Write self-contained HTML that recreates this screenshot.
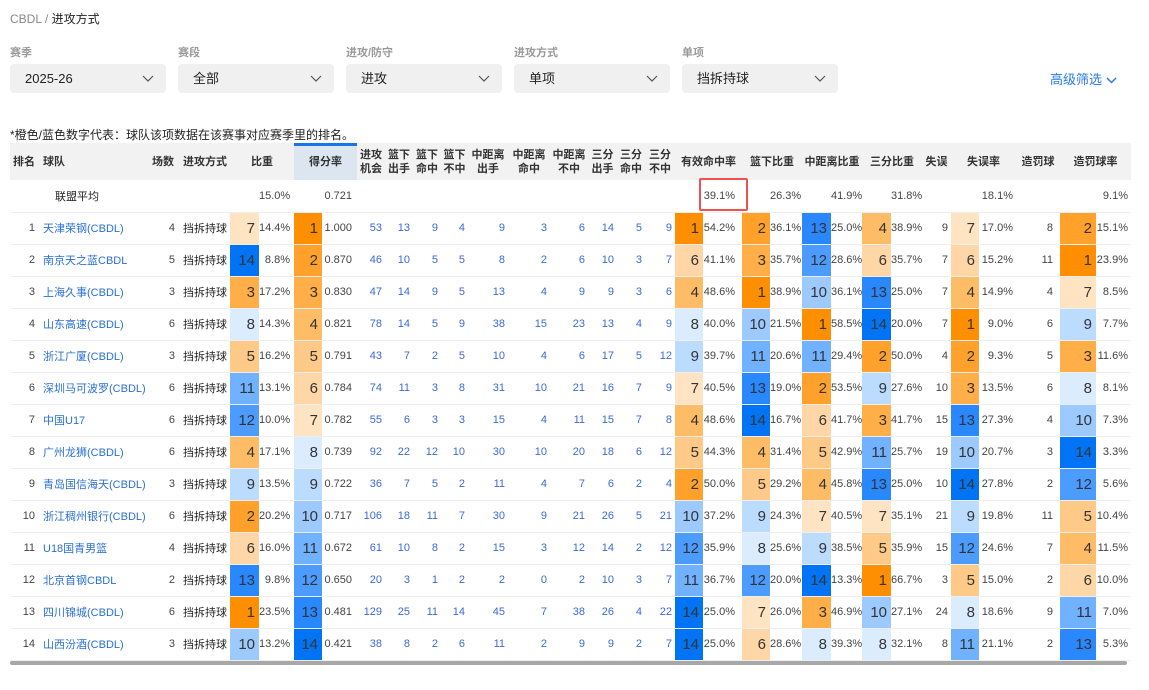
<!DOCTYPE html>
<html><head><meta charset="utf-8">
<style>
*{margin:0;padding:0;box-sizing:border-box}
body{width:1149px;height:690px;background:#fff;font-family:"Liberation Sans","Noto Sans CJK SC",sans-serif;position:relative;overflow:hidden;color:#333}
.bc{position:absolute;left:10px;top:10px;font-size:12px;color:#888}
.bc b{font-weight:normal;color:#222}
.lab{position:absolute;top:44px;font-size:11px;color:#999;font-weight:bold}
.sel{position:absolute;top:64px;width:156px;height:29px;background:#f0f0f0;border-radius:4px;font-size:13px;color:#222;padding-left:15px;line-height:29px}
.sel svg{position:absolute;right:12px;top:11px}
.adv{position:absolute;left:1050px;top:69px;font-size:13px;color:#2a7ae2}
.note{position:absolute;left:10px;top:126px;font-size:12px;color:#222}
table{position:absolute;left:10px;top:143px;border-collapse:collapse;table-layout:fixed;width:1121px}
td{height:32px;border-bottom:1px solid #eee;font-size:11px;color:#444;text-align:right;padding:0 3px 0 0;white-space:nowrap;overflow:hidden}
thead td{height:37px;background:#f2f2f2;font-size:11px;font-weight:bold;color:#333;text-align:center;padding:0;line-height:14px;border-bottom:none}
thead td.hl{background:#dce6f0;box-shadow:inset 0 3px 0 #1a73e8}
td.rk{padding-right:5px;color:#444;font-size:11px}
td.tm{text-align:left;padding-left:3px;color:#2a6fd6;font-size:11px}
td.md{text-align:left;padding-left:5px;color:#222;font-size:11px}
td.n{color:#3a6ad8}
td.r{font-size:15px;color:#333;padding-right:4px}
.c1{background:#ff8f00}.c2{background:#ffa12a}.c3{background:#ffae48}.c4{background:#ffbc66}.c5{background:#ffc987}.c6{background:#ffd7a6}.c7{background:#ffe4c4}
.c8{background:#dcecff}.c9{background:#bcdcff}.c10{background:#9ccaff}.c11{background:#70b2ff}.c12{background:#4c9cff}.c13{background:#2a88ff}.c14{background:#0074f5}
.box{position:absolute;left:699px;top:178px;width:49px;height:33px;border:2px solid #f05050;border-radius:2px}
.sb{position:absolute;left:10px;top:661px;width:1117px;height:4px;background:#a8a8a8;border-radius:2px}
</style></head><body>
<div class="bc">CBDL / <b>进攻方式</b></div>
<div class="lab" style="left:10px">赛季</div>
<div class="lab" style="left:178px">赛段</div>
<div class="lab" style="left:346px">进攻/防守</div>
<div class="lab" style="left:514px">进攻方式</div>
<div class="lab" style="left:682px">单项</div>
<div class="sel" style="left:10px">2025-26<svg width="12" height="7" viewBox="0 0 12 7"><path d="M1 1l5 5 5-5" fill="none" stroke="#555" stroke-width="1.2"/></svg></div>
<div class="sel" style="left:178px">全部<svg width="12" height="7" viewBox="0 0 12 7"><path d="M1 1l5 5 5-5" fill="none" stroke="#555" stroke-width="1.2"/></svg></div>
<div class="sel" style="left:346px">进攻<svg width="12" height="7" viewBox="0 0 12 7"><path d="M1 1l5 5 5-5" fill="none" stroke="#555" stroke-width="1.2"/></svg></div>
<div class="sel" style="left:514px">单项<svg width="12" height="7" viewBox="0 0 12 7"><path d="M1 1l5 5 5-5" fill="none" stroke="#555" stroke-width="1.2"/></svg></div>
<div class="sel" style="left:682px">挡拆持球<svg width="12" height="7" viewBox="0 0 12 7"><path d="M1 1l5 5 5-5" fill="none" stroke="#555" stroke-width="1.2"/></svg></div>
<div class="adv">高级筛选 <svg width="11" height="7" viewBox="0 0 11 7"><path d="M1 1l4.5 4.5L10 1" fill="none" stroke="#2a7ae2" stroke-width="1.5"/></svg></div>
<div class="note">*橙色/蓝色数字代表：球队该项数据在该赛事对应赛季里的排名。</div>
<table>
<colgroup>
<col style="width:30px"><col style="width:110px"><col style="width:28px"><col style="width:52px">
<col style="width:29px"><col style="width:35px"><col style="width:28px"><col style="width:35px">
<col style="width:28px"><col style="width:28px"><col style="width:28px"><col style="width:27px">
<col style="width:40px"><col style="width:42px"><col style="width:38px"><col style="width:29px"><col style="width:28px"><col style="width:30px">
<col style="width:28px"><col style="width:39px"><col style="width:28px"><col style="width:32px"><col style="width:29px"><col style="width:31px"><col style="width:29px"><col style="width:31px">
<col style="width:29px"><col style="width:28px"><col style="width:37px"><col style="width:44px"><col style="width:36px"><col style="width:35px">
</colgroup>
<thead><tr>
<td style="text-align:left;padding-left:3px">排名</td><td style="text-align:left;padding-left:3px">球队</td><td style="text-align:right;padding-right:4px">场数</td><td style="text-align:left;padding-left:5px">进攻方式</td>
<td colspan="2">比重</td><td colspan="2" class="hl">得分率</td>
<td>进攻<br>机会</td><td>篮下<br>出手</td><td>篮下<br>命中</td><td>篮下<br>不中</td><td>中距离<br>出手</td><td>中距离<br>命中</td><td>中距离<br>不中</td><td>三分<br>出手</td><td>三分<br>命中</td><td>三分<br>不中</td>
<td colspan="2">有效命中率</td><td colspan="2">篮下比重</td><td colspan="2">中距离比重</td><td colspan="2">三分比重</td><td>失误</td><td colspan="2">失误率</td><td>造罚球</td><td colspan="2">造罚球率</td>
</tr></thead>
<tbody>
<tr><td></td><td colspan="3" class="md" style="padding-left:15px">联盟平均</td><td></td><td style="padding-right:4px">15.0%</td><td></td><td style="padding-right:5px">0.721</td><td></td><td></td><td></td><td></td><td></td><td></td><td></td><td></td><td></td><td></td><td></td><td style="padding-right:7px">39.1%</td><td></td><td>26.3%</td><td></td><td>41.9%</td><td></td><td>31.8%</td><td></td><td></td><td>18.1%</td><td></td><td></td><td>9.1%</td></tr>
<tr><td class="rk">1</td><td class="tm">天津荣钢(CBDL)</td><td>4</td><td class="md">挡拆持球</td><td class="r c7">7</td><td style="padding-right:4px">14.4%</td><td class="r c1">1</td><td style="padding-right:5px">1.000</td><td class="n">53</td><td class="n">13</td><td class="n">9</td><td class="n">4</td><td class="n">9</td><td class="n">3</td><td class="n">6</td><td class="n">14</td><td class="n">5</td><td class="n">9</td><td class="r c1">1</td><td style="padding-right:7px">54.2%</td><td class="r c2">2</td><td>36.1%</td><td class="r c13">13</td><td>25.0%</td><td class="r c4">4</td><td>38.9%</td><td>9</td><td class="r c7">7</td><td>17.0%</td><td style="padding-right:7px">8</td><td class="r c2">2</td><td>15.1%</td></tr>
<tr><td class="rk">2</td><td class="tm">南京天之蓝CBDL</td><td>5</td><td class="md">挡拆持球</td><td class="r c14">14</td><td style="padding-right:4px">8.8%</td><td class="r c2">2</td><td style="padding-right:5px">0.870</td><td class="n">46</td><td class="n">10</td><td class="n">5</td><td class="n">5</td><td class="n">8</td><td class="n">2</td><td class="n">6</td><td class="n">10</td><td class="n">3</td><td class="n">7</td><td class="r c6">6</td><td style="padding-right:7px">41.1%</td><td class="r c3">3</td><td>35.7%</td><td class="r c12">12</td><td>28.6%</td><td class="r c6">6</td><td>35.7%</td><td>7</td><td class="r c6">6</td><td>15.2%</td><td style="padding-right:7px">11</td><td class="r c1">1</td><td>23.9%</td></tr>
<tr><td class="rk">3</td><td class="tm">上海久事(CBDL)</td><td>3</td><td class="md">挡拆持球</td><td class="r c3">3</td><td style="padding-right:4px">17.2%</td><td class="r c3">3</td><td style="padding-right:5px">0.830</td><td class="n">47</td><td class="n">14</td><td class="n">9</td><td class="n">5</td><td class="n">13</td><td class="n">4</td><td class="n">9</td><td class="n">9</td><td class="n">3</td><td class="n">6</td><td class="r c4">4</td><td style="padding-right:7px">48.6%</td><td class="r c1">1</td><td>38.9%</td><td class="r c10">10</td><td>36.1%</td><td class="r c13">13</td><td>25.0%</td><td>7</td><td class="r c4">4</td><td>14.9%</td><td style="padding-right:7px">4</td><td class="r c7">7</td><td>8.5%</td></tr>
<tr><td class="rk">4</td><td class="tm">山东高速(CBDL)</td><td>6</td><td class="md">挡拆持球</td><td class="r c8">8</td><td style="padding-right:4px">14.3%</td><td class="r c4">4</td><td style="padding-right:5px">0.821</td><td class="n">78</td><td class="n">14</td><td class="n">5</td><td class="n">9</td><td class="n">38</td><td class="n">15</td><td class="n">23</td><td class="n">13</td><td class="n">4</td><td class="n">9</td><td class="r c8">8</td><td style="padding-right:7px">40.0%</td><td class="r c10">10</td><td>21.5%</td><td class="r c1">1</td><td>58.5%</td><td class="r c14">14</td><td>20.0%</td><td>7</td><td class="r c1">1</td><td>9.0%</td><td style="padding-right:7px">6</td><td class="r c9">9</td><td>7.7%</td></tr>
<tr><td class="rk">5</td><td class="tm">浙江广厦(CBDL)</td><td>3</td><td class="md">挡拆持球</td><td class="r c5">5</td><td style="padding-right:4px">16.2%</td><td class="r c5">5</td><td style="padding-right:5px">0.791</td><td class="n">43</td><td class="n">7</td><td class="n">2</td><td class="n">5</td><td class="n">10</td><td class="n">4</td><td class="n">6</td><td class="n">17</td><td class="n">5</td><td class="n">12</td><td class="r c9">9</td><td style="padding-right:7px">39.7%</td><td class="r c11">11</td><td>20.6%</td><td class="r c11">11</td><td>29.4%</td><td class="r c2">2</td><td>50.0%</td><td>4</td><td class="r c2">2</td><td>9.3%</td><td style="padding-right:7px">5</td><td class="r c3">3</td><td>11.6%</td></tr>
<tr><td class="rk">6</td><td class="tm">深圳马可波罗(CBDL)</td><td>6</td><td class="md">挡拆持球</td><td class="r c11">11</td><td style="padding-right:4px">13.1%</td><td class="r c6">6</td><td style="padding-right:5px">0.784</td><td class="n">74</td><td class="n">11</td><td class="n">3</td><td class="n">8</td><td class="n">31</td><td class="n">10</td><td class="n">21</td><td class="n">16</td><td class="n">7</td><td class="n">9</td><td class="r c7">7</td><td style="padding-right:7px">40.5%</td><td class="r c13">13</td><td>19.0%</td><td class="r c2">2</td><td>53.5%</td><td class="r c9">9</td><td>27.6%</td><td>10</td><td class="r c3">3</td><td>13.5%</td><td style="padding-right:7px">6</td><td class="r c8">8</td><td>8.1%</td></tr>
<tr><td class="rk">7</td><td class="tm">中国U17</td><td>6</td><td class="md">挡拆持球</td><td class="r c12">12</td><td style="padding-right:4px">10.0%</td><td class="r c7">7</td><td style="padding-right:5px">0.782</td><td class="n">55</td><td class="n">6</td><td class="n">3</td><td class="n">3</td><td class="n">15</td><td class="n">4</td><td class="n">11</td><td class="n">15</td><td class="n">7</td><td class="n">8</td><td class="r c4">4</td><td style="padding-right:7px">48.6%</td><td class="r c14">14</td><td>16.7%</td><td class="r c6">6</td><td>41.7%</td><td class="r c3">3</td><td>41.7%</td><td>15</td><td class="r c13">13</td><td>27.3%</td><td style="padding-right:7px">4</td><td class="r c10">10</td><td>7.3%</td></tr>
<tr><td class="rk">8</td><td class="tm">广州龙狮(CBDL)</td><td>6</td><td class="md">挡拆持球</td><td class="r c4">4</td><td style="padding-right:4px">17.1%</td><td class="r c8">8</td><td style="padding-right:5px">0.739</td><td class="n">92</td><td class="n">22</td><td class="n">12</td><td class="n">10</td><td class="n">30</td><td class="n">10</td><td class="n">20</td><td class="n">18</td><td class="n">6</td><td class="n">12</td><td class="r c5">5</td><td style="padding-right:7px">44.3%</td><td class="r c4">4</td><td>31.4%</td><td class="r c5">5</td><td>42.9%</td><td class="r c11">11</td><td>25.7%</td><td>19</td><td class="r c10">10</td><td>20.7%</td><td style="padding-right:7px">3</td><td class="r c14">14</td><td>3.3%</td></tr>
<tr><td class="rk">9</td><td class="tm">青岛国信海天(CBDL)</td><td>3</td><td class="md">挡拆持球</td><td class="r c9">9</td><td style="padding-right:4px">13.5%</td><td class="r c9">9</td><td style="padding-right:5px">0.722</td><td class="n">36</td><td class="n">7</td><td class="n">5</td><td class="n">2</td><td class="n">11</td><td class="n">4</td><td class="n">7</td><td class="n">6</td><td class="n">2</td><td class="n">4</td><td class="r c2">2</td><td style="padding-right:7px">50.0%</td><td class="r c5">5</td><td>29.2%</td><td class="r c4">4</td><td>45.8%</td><td class="r c13">13</td><td>25.0%</td><td>10</td><td class="r c14">14</td><td>27.8%</td><td style="padding-right:7px">2</td><td class="r c12">12</td><td>5.6%</td></tr>
<tr><td class="rk">10</td><td class="tm">浙江稠州银行(CBDL)</td><td>6</td><td class="md">挡拆持球</td><td class="r c2">2</td><td style="padding-right:4px">20.2%</td><td class="r c10">10</td><td style="padding-right:5px">0.717</td><td class="n">106</td><td class="n">18</td><td class="n">11</td><td class="n">7</td><td class="n">30</td><td class="n">9</td><td class="n">21</td><td class="n">26</td><td class="n">5</td><td class="n">21</td><td class="r c10">10</td><td style="padding-right:7px">37.2%</td><td class="r c9">9</td><td>24.3%</td><td class="r c7">7</td><td>40.5%</td><td class="r c7">7</td><td>35.1%</td><td>21</td><td class="r c9">9</td><td>19.8%</td><td style="padding-right:7px">11</td><td class="r c5">5</td><td>10.4%</td></tr>
<tr><td class="rk">11</td><td class="tm">U18国青男篮</td><td>4</td><td class="md">挡拆持球</td><td class="r c6">6</td><td style="padding-right:4px">16.0%</td><td class="r c11">11</td><td style="padding-right:5px">0.672</td><td class="n">61</td><td class="n">10</td><td class="n">8</td><td class="n">2</td><td class="n">15</td><td class="n">3</td><td class="n">12</td><td class="n">14</td><td class="n">2</td><td class="n">12</td><td class="r c12">12</td><td style="padding-right:7px">35.9%</td><td class="r c8">8</td><td>25.6%</td><td class="r c9">9</td><td>38.5%</td><td class="r c5">5</td><td>35.9%</td><td>15</td><td class="r c12">12</td><td>24.6%</td><td style="padding-right:7px">7</td><td class="r c4">4</td><td>11.5%</td></tr>
<tr><td class="rk">12</td><td class="tm">北京首钢CBDL</td><td>2</td><td class="md">挡拆持球</td><td class="r c13">13</td><td style="padding-right:4px">9.8%</td><td class="r c12">12</td><td style="padding-right:5px">0.650</td><td class="n">20</td><td class="n">3</td><td class="n">1</td><td class="n">2</td><td class="n">2</td><td class="n">0</td><td class="n">2</td><td class="n">10</td><td class="n">3</td><td class="n">7</td><td class="r c11">11</td><td style="padding-right:7px">36.7%</td><td class="r c12">12</td><td>20.0%</td><td class="r c14">14</td><td>13.3%</td><td class="r c1">1</td><td>66.7%</td><td>3</td><td class="r c5">5</td><td>15.0%</td><td style="padding-right:7px">2</td><td class="r c6">6</td><td>10.0%</td></tr>
<tr><td class="rk">13</td><td class="tm">四川锦城(CBDL)</td><td>6</td><td class="md">挡拆持球</td><td class="r c1">1</td><td style="padding-right:4px">23.5%</td><td class="r c13">13</td><td style="padding-right:5px">0.481</td><td class="n">129</td><td class="n">25</td><td class="n">11</td><td class="n">14</td><td class="n">45</td><td class="n">7</td><td class="n">38</td><td class="n">26</td><td class="n">4</td><td class="n">22</td><td class="r c14">14</td><td style="padding-right:7px">25.0%</td><td class="r c7">7</td><td>26.0%</td><td class="r c3">3</td><td>46.9%</td><td class="r c10">10</td><td>27.1%</td><td>24</td><td class="r c8">8</td><td>18.6%</td><td style="padding-right:7px">9</td><td class="r c11">11</td><td>7.0%</td></tr>
<tr><td class="rk">14</td><td class="tm">山西汾酒(CBDL)</td><td>3</td><td class="md">挡拆持球</td><td class="r c10">10</td><td style="padding-right:4px">13.2%</td><td class="r c14">14</td><td style="padding-right:5px">0.421</td><td class="n">38</td><td class="n">8</td><td class="n">2</td><td class="n">6</td><td class="n">11</td><td class="n">2</td><td class="n">9</td><td class="n">9</td><td class="n">2</td><td class="n">7</td><td class="r c14">14</td><td style="padding-right:7px">25.0%</td><td class="r c6">6</td><td>28.6%</td><td class="r c8">8</td><td>39.3%</td><td class="r c8">8</td><td>32.1%</td><td>8</td><td class="r c11">11</td><td>21.1%</td><td style="padding-right:7px">2</td><td class="r c13">13</td><td>5.3%</td></tr>
</tbody></table>
<div class="box"></div>
<div class="sb"></div>
</body></html>
